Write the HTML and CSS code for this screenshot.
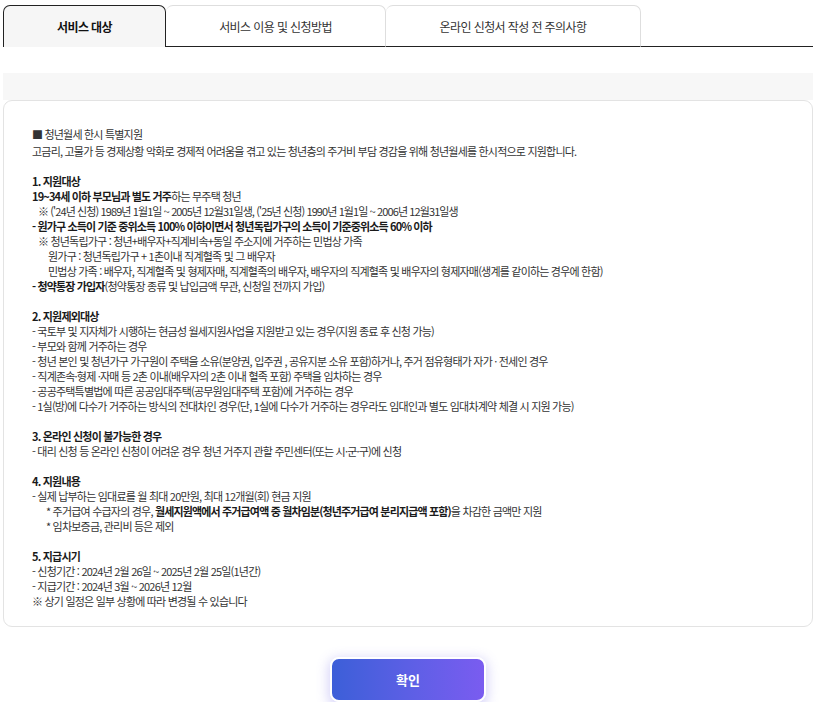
FILE: index.html
```html
<!DOCTYPE html>
<html lang="ko">
<head>
<meta charset="utf-8">
<title>청년월세 한시 특별지원</title>
<link rel="stylesheet" href="styles.css">
</head>
<body>
<div class="wrap">
  <div class="tabs">
    <div class="tab active">서비스 대상</div>
    <div class="tab t2">서비스 이용 및 신청방법</div>
    <div class="tab t3">온라인 신청서 작성 전 주의사항</div>
    <div class="tab-rest"></div>
  </div>
  <div class="band"></div>
  <div class="card">
    <div class="sec first">
      <div class="ln">■ 청년월세 한시 특별지원</div>
      <div class="ln">고금리, 고물가 등 경제상황 악화로 경제적 어려움을 겪고 있는 청년층의 주거비 부담 경감을 위해 청년월세를 한시적으로 지원합니다.</div>
    </div>
    <div class="sec">
      <div class="ln h">1. 지원대상</div>
      <div class="ln"><b>19~34세 이하 부모님과 별도 거주</b>하는 무주택 청년</div>
      <div class="ln i1 num">※ ('24년 신청) 1989년 1월1일 ~ 2005년 12월31일생, ('25년 신청) 1990년 1월1일 ~ 2006년 12월31일생</div>
      <div class="ln"><b>- 원가구 소득이 기준 중위소득 100% 이하이면서 청년독립가구의 소득이 기준중위소득 60% 이하</b></div>
      <div class="ln i1">※ 청년독립가구 : 청년+배우자+직계비속+동일 주소지에 거주하는 민법상 가족</div>
      <div class="ln i2">원가구 : 청년독립가구 + 1촌이내 직계혈족 및 그 배우자</div>
      <div class="ln i2">민법상 가족 : 배우자, 직계혈족 및 형제자매, 직계혈족의 배우자, 배우자의 직계혈족 및 배우자의 형제자매(생계를 같이하는 경우에 한함)</div>
      <div class="ln"><b>- 청약통장 가입자</b>(청약통장 종류 및 납입금액 무관, 신청일 전까지 가입)</div>
    </div>
    <div class="sec">
      <div class="ln h">2. 지원제외대상</div>
      <div class="ln">- 국토부 및 지자체가 시행하는 현금성 월세지원사업을 지원받고 있는 경우(지원 종료 후 신청 가능)</div>
      <div class="ln">- 부모와 함께 거주하는 경우</div>
      <div class="ln">- 청년 본인 및 청년가구 가구원이 주택을 소유(분양권, 입주권 , 공유지분 소유 포함)하거나, 주거 점유형태가 자가 · 전세인 경우</div>
      <div class="ln">- 직계존속·형제 ·자매 등 2촌 이내(배우자의 2촌 이내 혈족 포함) 주택을 임차하는 경우</div>
      <div class="ln">- 공공주택특별법에 따른 공공임대주택(공무원임대주택 포함)에 거주하는 경우</div>
      <div class="ln">- 1실(방)에 다수가 거주하는 방식의 전대차인 경우(단, 1실에 다수가 거주하는 경우라도 임대인과 별도 임대차계약 체결 시 지원 가능)</div>
    </div>
    <div class="sec">
      <div class="ln h">3. 온라인 신청이 불가능한 경우</div>
      <div class="ln">- 대리 신청 등 온라인 신청이 어려운 경우 청년 거주지 관할 주민센터(또는 시·군·구)에 신청</div>
    </div>
    <div class="sec">
      <div class="ln h">4. 지원내용</div>
      <div class="ln">- 실제 납부하는 임대료를 월 최대 20만원, 최대 12개월(회) 현금 지원</div>
      <div class="ln i3">* 주거급여 수급자의 경우, <b>월세지원액에서 주거급여액 중 월차임분(청년주거급여 분리지급액 포함)</b>을 차감한 금액만 지원</div>
      <div class="ln i3">* 임차보증금, 관리비 등은 제외</div>
    </div>
    <div class="sec">
      <div class="ln h">5. 지급시기</div>
      <div class="ln">- 신청기간 : 2024년 2월 26일 ~ 2025년 2월 25일(1년간)</div>
      <div class="ln">- 지급기간 : 2024년 3월 ~ 2026년 12월</div>
      <div class="ln">※ 상기 일정은 일부 상황에 따라 변경될 수 있습니다</div>
    </div>
  </div>
  <div class="actions">
    <button class="btn" type="button">확인</button>
  </div>
</div>
</body>
</html>
```

FILE: styles.css
```css
* { box-sizing: border-box; }
html, body { margin: 0; padding: 0; background: #fff; }
body {
  font-family: "Noto Sans CJK KR", "Noto Sans", sans-serif;
  color: #333;
}
.wrap {
  width: 810px;
  margin-left: 3px;
  padding-top: 5px;
}
.tabs {
  display: flex;
  height: 42px;
}
.tab {
  height: 42px;
  display: flex;
  align-items: center;
  justify-content: center;
  font-size: 12px;
  letter-spacing: -0.6px;
  color: #333;
  background: #fff;
  border: 1px solid #dedede;
  border-bottom: 1.5px solid #222;
  border-left: none;
  border-radius: 7px 7px 0 0;
}
.tab.active {
  width: 163px;
  background: #f6f6f6;
  border: 1px solid #222;
  border-bottom: none;
  font-weight: 700;
  color: #111;
}
.tab.t2 { width: 220px; border-left: none; }
.tab.t3 { width: 255px; }
.tab-rest {
  flex: 1;
  border-bottom: 1.5px solid #222;
}
.band {
  height: 27px;
  margin-top: 26px;
  background: #f7f7f7;
}
.card {
  border: 1px solid #e3e3e3;
  border-radius: 9px;
  padding: 26px 20px 16px 28px;
  font-size: 11px;
  line-height: 15px;
  letter-spacing: -0.8px;
  height: 527px;
}
.first .ln:first-child { margin-bottom: 2px; }
.sec + .sec { margin-top: 15px; }
.ln { white-space: nowrap; }
.ln b, .h { font-weight: 700; color: #1a1a1a; }
.ln b { letter-spacing: -0.85px; }
.num { letter-spacing: -0.9px; }
.i1 { padding-left: 6px; }
.i2 { padding-left: 16px; }
.i3 { padding-left: 14px; }
.actions {
  display: flex;
  justify-content: center;
  padding-top: 30px;
}
.btn {
  width: 156px;
  height: 45px;
  border: 2px solid #fff;
  border-radius: 9px;
  background: linear-gradient(90deg, #3c5fd8 0%, #5f5fe6 55%, #7a5cf0 100%);
  color: #fff;
  font-family: "Noto Sans CJK KR", sans-serif;
  font-size: 13px;
  font-weight: 700;
  box-shadow: 0 3px 12px 2px rgba(110, 100, 230, 0.28);
}
```
